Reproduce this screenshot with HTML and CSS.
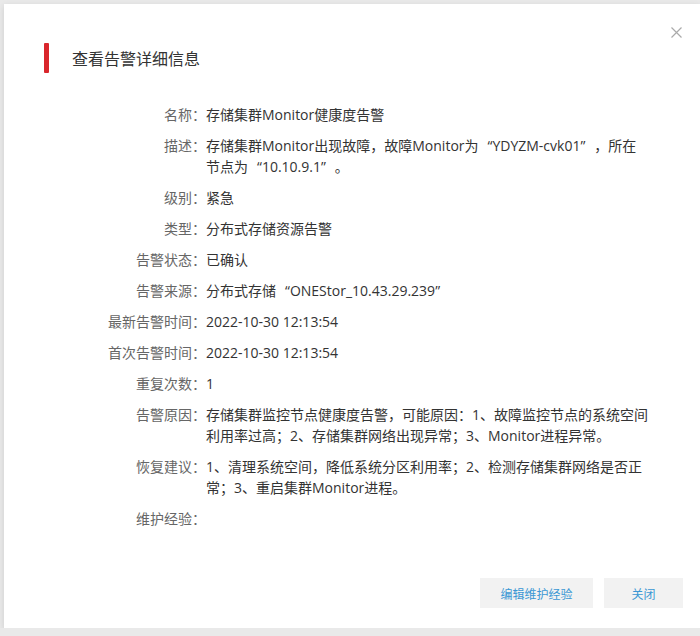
FILE: index.html
```html
<!DOCTYPE html>
<html lang="zh-CN">
<head>
    <meta charset="UTF-8">
    <meta name="viewport" content="width=device-width, initial-scale=1.0">
    <title>查看告警详细信息</title>
    <link rel="stylesheet" href="styles.css">
</head>
<body>
    <div class="dialog">
        <div class="dialog-header">
            <span class="mark"></span>
            <h2>查看告警详细信息</h2>
            <span class="close" title="关闭">
                <svg width="11" height="11" viewBox="0 0 11 11"><path d="M0.5 0.5L10.5 10.5M10.5 0.5L0.5 10.5" stroke="#aaa" stroke-width="1.2"/></svg>
            </span>
        </div>

        <dl class="detail">
            <dt>名称：</dt><dd>存储集群Monitor健康度告警</dd>
            <dt>描述：</dt><dd>存储集群Monitor出现故障，故障Monitor为<span class="lq">“</span>YDYZM-cvk01<span class="rq">”</span>，所在节点为<span class="lq">“</span>10.10.9.1<span class="rq">”</span>。</dd>
            <dt>级别：</dt><dd>紧急</dd>
            <dt>类型：</dt><dd>分布式存储资源告警</dd>
            <dt>告警状态：</dt><dd>已确认</dd>
            <dt>告警来源：</dt><dd>分布式存储<span class="lq">“</span>ONEStor_10.43.29.239<span class="rq">”</span></dd>
            <dt>最新告警时间：</dt><dd>2022-10-30 12:13:54</dd>
            <dt>首次告警时间：</dt><dd>2022-10-30 12:13:54</dd>
            <dt>重复次数：</dt><dd>1</dd>
            <dt>告警原因：</dt><dd>存储集群监控节点健康度告警，可能原因：1、故障监控节点的系统空间利用率过高；2、存储集群网络出现异常；3、Monitor进程异常。</dd>
            <dt>恢复建议：</dt><dd>1、清理系统空间，降低系统分区利用率；2、检测存储集群网络是否正常；3、重启集群Monitor进程。</dd>
            <dt>维护经验：</dt><dd></dd>
        </dl>

        <div class="dialog-footer">
            <button class="btn btn-wide">编辑维护经验</button>
            <button class="btn">关闭</button>
        </div>
    </div>
</body>
</html>
```

FILE: styles.css
```css
body { margin: 0; background: #e9e9e9; font-family: "Open Sans", "Noto Sans CJK SC", sans-serif; overflow: hidden; }
.dialog { position: relative; margin: 4px 0 0 4px; width: 696px; height: 624px; background: #fff; box-shadow: 0 2px 6px rgba(0,0,0,0.12); display: flex; flex-direction: column; box-sizing: border-box; }
.dialog-header { display: flex; align-items: center; padding: 39px 0 0 40px; height: 30px; }
.mark { width: 5px; height: 30px; background: #d9262c; border-radius: 1px; }
.dialog-header h2 { margin: 0 0 0 23px; font-size: 16px; font-weight: normal; color: #333; font-family: "Noto Sans CJK SC", sans-serif; }
.close { position: absolute; top: 23px; right: 18px; cursor: pointer; line-height: 0; }
.detail { display: grid; grid-template-columns: 202px 443px; row-gap: 10px; margin: 31px 0 0 0; font-size: 14px; line-height: 21px; }
.detail dt { text-align: right; color: #666; font-family: "Noto Sans CJK SC", sans-serif; }
.detail dd { margin: 0; color: #333; }
.lq { padding-left: 9px; }
.rq { padding-right: 9px; }
.dialog-footer { margin-top: auto; display: flex; justify-content: flex-end; gap: 11px; padding: 0 17px 20px 0; }
.btn { height: 30px; width: 79px; border: none; background: #f2f2f2; color: #3a97d4; font-size: 12px; font-family: "Noto Sans CJK SC", sans-serif; cursor: pointer; }
.btn-wide { width: 113px; }
.btn:hover { background: #e8e8e8; }
```
